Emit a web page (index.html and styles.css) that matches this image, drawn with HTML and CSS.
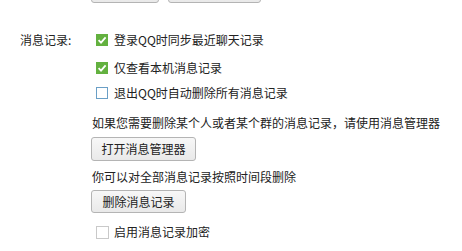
FILE: index.html
```html
<!DOCTYPE html>
<html lang="zh-CN">
<head>
<meta charset="utf-8">
<link rel="stylesheet" href="styles.css">
</head>
<body>
<div class="top-row">
  <button class="btn btn-a"></button>
  <button class="btn btn-b"></button>
</div>
<div class="section">
  <div class="label">消息记录:</div>
  <div class="content">
    <div class="cb-row r1"><span class="box checked"><svg viewBox="0 0 12 12" width="12" height="12"><path d="M2.6 6.2 L5 8.6 L9.6 3.4" fill="none" stroke="#fff" stroke-width="1.8"/></svg></span><span>登录QQ时同步最近聊天记录</span></div>
    <div class="cb-row r2"><span class="box checked"><svg viewBox="0 0 12 12" width="12" height="12"><path d="M2.6 6.2 L5 8.6 L9.6 3.4" fill="none" stroke="#fff" stroke-width="1.8"/></svg></span><span>仅查看本机消息记录</span></div>
    <div class="cb-row r3"><span class="box blue"></span><span>退出QQ时自动删除所有消息记录</span></div>
    <div class="text t1">如果您需要删除某个人或者某个群的消息记录，请使用消息管理器</div>
    <button class="btn b1">打开消息管理器</button>
    <div class="text t2">你可以对全部消息记录按照时间段删除</div>
    <button class="btn b2">删除消息记录</button>
    <div class="cb-row r4"><span class="box grey"></span><span>启用消息记录加密</span></div>
  </div>
</div>
</body>
</html>
```
FILE: styles.css
```css
html, body {
  margin: 0;
  padding: 0;
  background: #ffffff;
  overflow: hidden;
}
body {
  width: 462px;
  height: 251px;
  font-family: "Noto Sans CJK SC", "Noto Sans", sans-serif;
  font-size: 12px;
  color: #222;
}
.top-row {
  display: flex;
  gap: 9px;
  padding-left: 91px;
  margin-top: -21px;
}
.btn {
  box-sizing: border-box;
  font-family: inherit;
  font-size: 12px;
  color: #222;
  border: 1px solid #b4b4b4;
  border-radius: 3px;
  background: linear-gradient(#f7f7f7, #e9e9e9);
  padding: 0;
  line-height: 20px;
  display: block;
}
.btn-a { width: 68px; height: 24px; }
.btn-b { width: 93px; height: 24px; }
.section {
  display: flex;
  padding-left: 20px;
  margin-top: 25px;
}
.label {
  width: 72px;
  height: 24px;
  line-height: 24px;
  flex-shrink: 0;
}
.content {
  display: flex;
  flex-direction: column;
  align-items: flex-start;
}
.cb-row {
  display: flex;
  align-items: center;
  gap: 6px;
  height: 24px;
  line-height: 24px;
  padding-left: 4px;
}
.r2 { margin-top: 4px; }
.r3 { margin-top: 1px; }
.r4 { margin-top: 7px; gap: 5px; }
.box {
  box-sizing: border-box;
  width: 12px;
  height: 12px;
  display: block;
  flex-shrink: 0;
}
.box svg { display: block; }
.checked { background: #63b13f; }
.blue { border: 1px solid #6a9fc6; background: #fff; }
.grey { border: 1px solid #c9c9c9; background: #fff; width: 13px; height: 13px; }
.text {
  line-height: 20px;
  white-space: nowrap;
}
.t1 { margin-top: 8px; }
.b1 { margin-top: 4px; width: 105px; height: 24px; margin-left: -1px; }
.t2 { margin-top: 6px; }
.b2 { margin-top: 3px; width: 95px; height: 23px; margin-left: -1px; }
```
